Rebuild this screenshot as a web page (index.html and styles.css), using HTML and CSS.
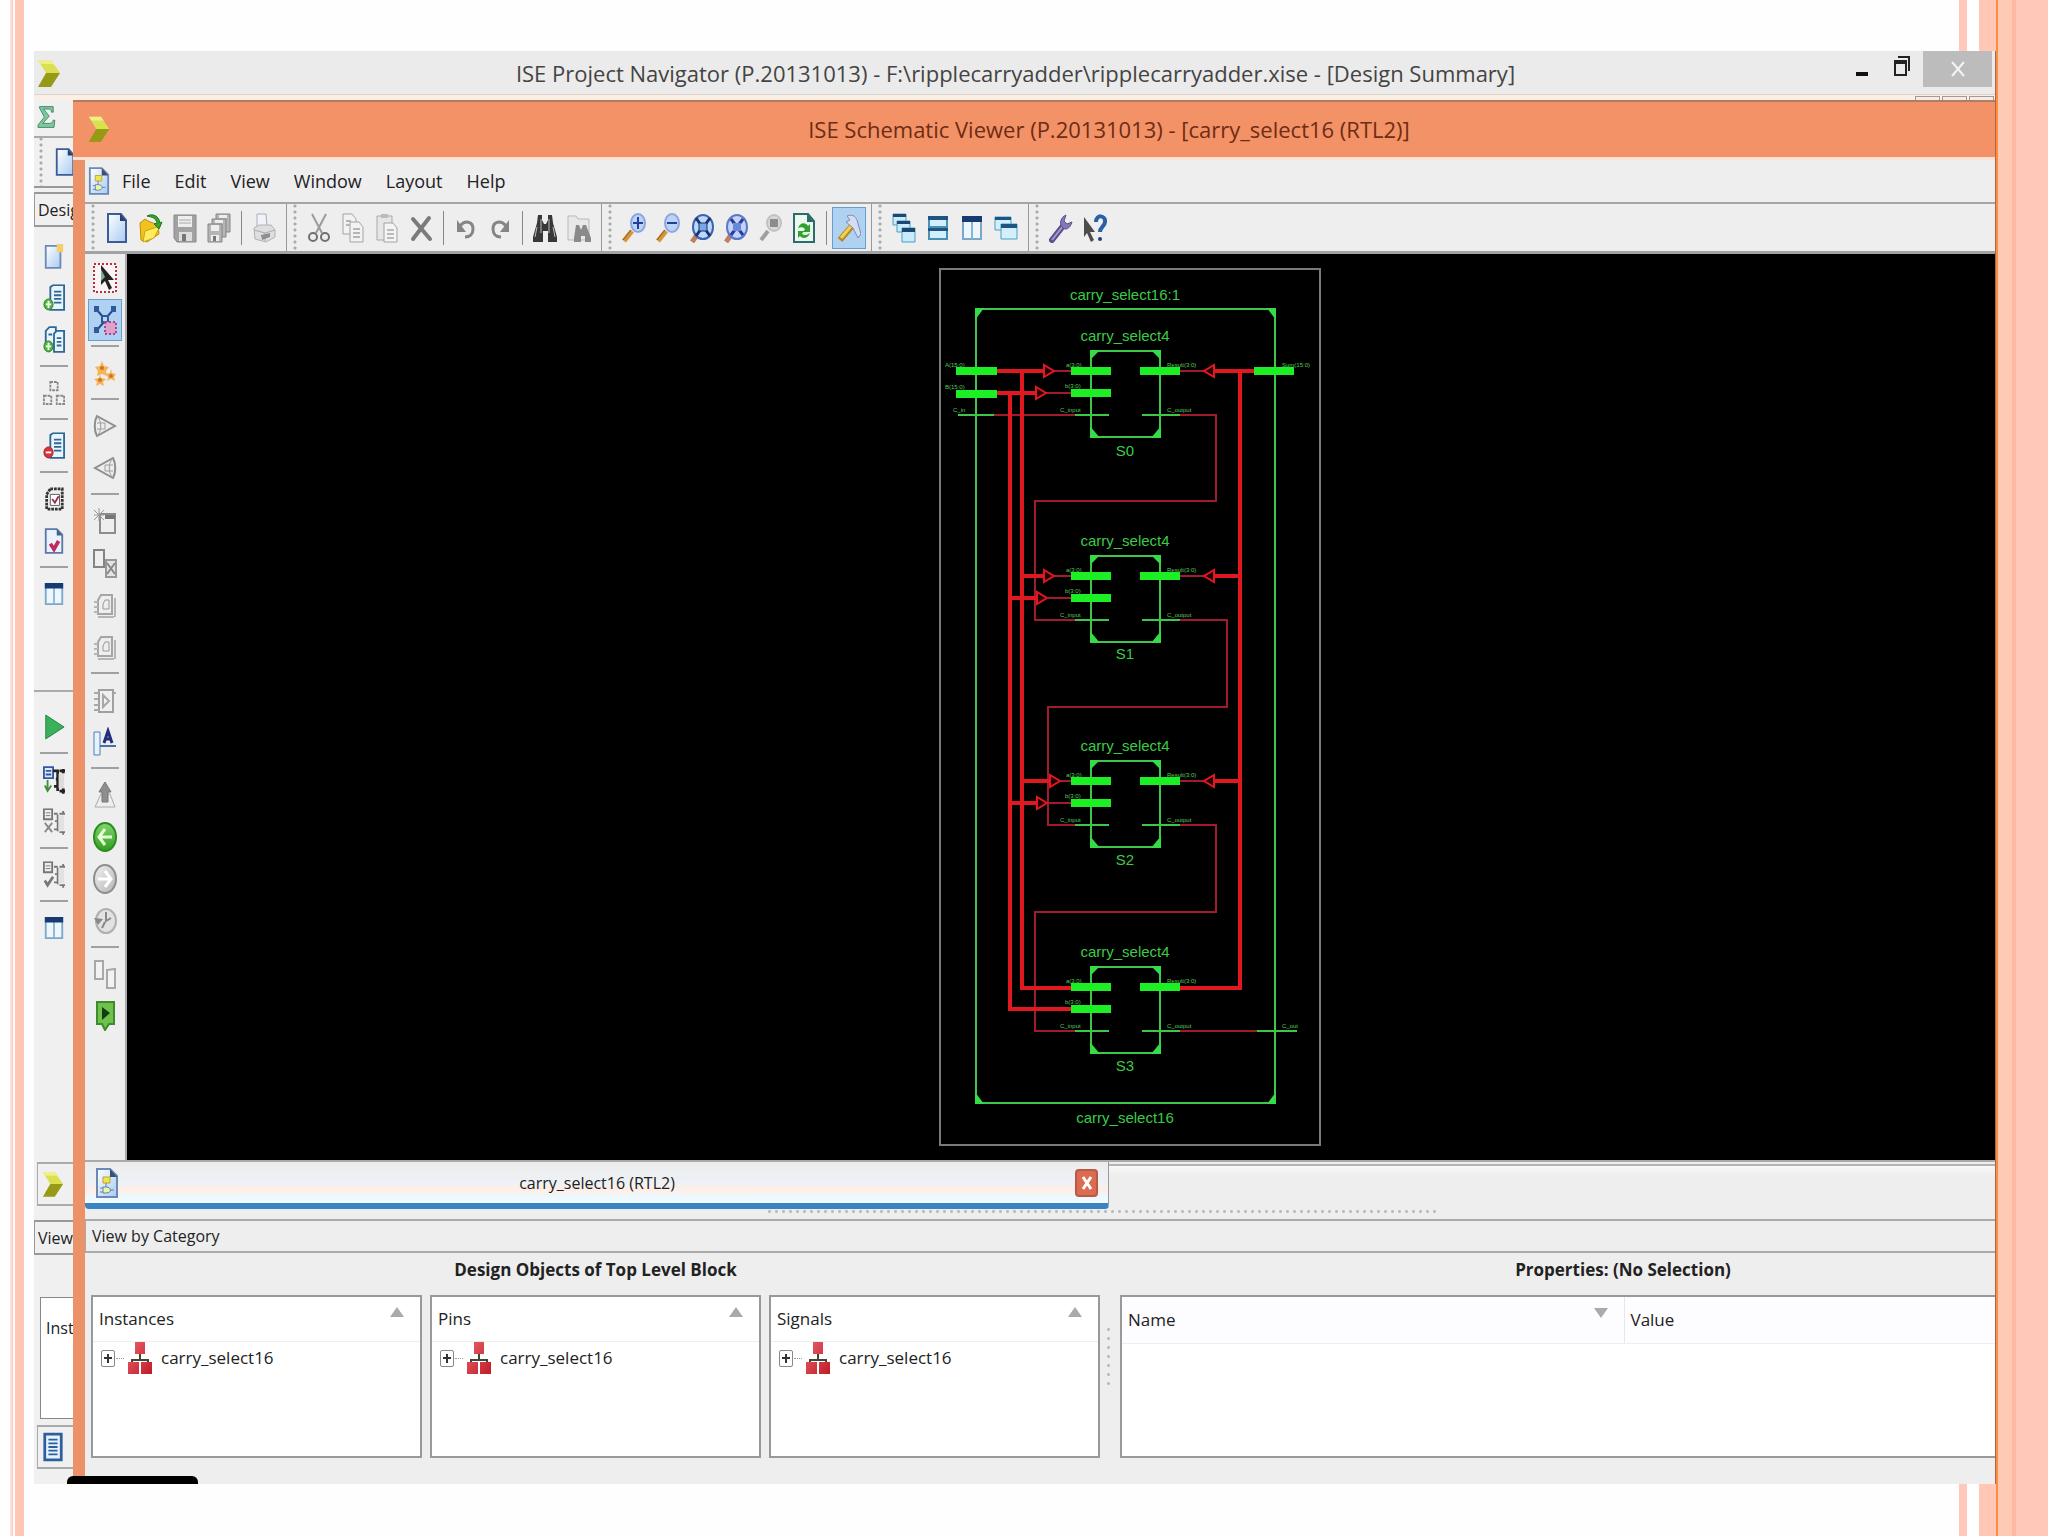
FILE: index.html
```html
<!DOCTYPE html>
<html lang="en">
<head>
<meta charset="utf-8">
<title>ISE Project Navigator</title>
<link rel="stylesheet" href="styles.css">
</head>
<body>
<svg class="defs" aria-hidden="true">
  <defs>
    <linearGradient id="paper" x1="0" y1="0" x2="1" y2="1"><stop offset="0" stop-color="#fff"/><stop offset="1" stop-color="#a9cbf2"/></linearGradient>
    <linearGradient id="leaf" x1="0" y1="0" x2="0" y2="1"><stop offset="0" stop-color="#7fd86a"/><stop offset="1" stop-color="#2f9e22"/></linearGradient>
    <linearGradient id="silver" x1="0" y1="0" x2="1" y2="1"><stop offset="0" stop-color="#f2f2f2"/><stop offset="1" stop-color="#b4b4b4"/></linearGradient>
    <linearGradient id="brick" x1="0" y1="0" x2="1" y2="1"><stop offset="0" stop-color="#e8606a"/><stop offset="1" stop-color="#c01c28"/></linearGradient>
  </defs>
  <symbol id="logo" viewBox="0 0 24 30"><path d="M1 2h13l9 13H9z" fill="#dbe050"/><path d="M9 15h14L14 29H1z" fill="#979a14"/><path d="M1 2h13l3 4H4z" fill="#eef08a"/></symbol>
  <symbol id="new" viewBox="0 0 24 30"><path d="M3 1h13l5 6v22H3z" fill="url(#paper)" stroke="#3c5c98" stroke-width="2"/><path d="M15 1v7h6z" fill="#26406e"/></symbol>
  <symbol id="open" viewBox="0 0 24 30"><path d="M1 10l5-4 3 2 10 4 1 9-12 8-6-2z" fill="#f2c21e" stroke="#b98d12"/><path d="M6 18l15-5-6 12-11 4z" fill="#ffec5c" stroke="#c9a51a"/><path d="M8 3c6-3 12 0 13 7l2-1-3 7-5-5 3-1c-1-5-5-6-10-7z" fill="#38a32c" stroke="#20771a"/></symbol>
  <symbol id="save" viewBox="0 0 24 30"><path d="M1 2h22v27H4l-3-4z" fill="#a2a2a2" stroke="#888"/><path d="M5 3h14v11H5z" fill="#eee"/><path d="M6 7h12M6 10h12" stroke="#aaa"/><path d="M6 19h13v9H6z" fill="#ddd"/><path d="M9 21h4v7H9z" fill="#777"/></symbol>
  <symbol id="saveall" viewBox="0 0 24 30"><g fill="#b5b5b5" stroke="#858585"><path d="M9 1h14v18H9z"/><path d="M5 6h14v18H5z"/><path d="M1 11h14v18H1z"/></g><path d="M4 12h8v6H4zM4 22h8v6H4zM8 7h8v3H8zM12 2h8v3h-8z" fill="#eee"/><path d="M6 23h3v5H6z" fill="#777"/></symbol>
  <symbol id="print" viewBox="0 0 24 30"><path d="M5 1h9l1 13H5z" fill="#f1f3f8" stroke="#a8adba"/><path d="M2 15l5-3h12l4 5v7l-9 5-11-3z" fill="#dedee2" stroke="#b2b2b2"/><path d="M2 17l11 3 10-3M13 20v8" fill="none" stroke="#aaa"/><path d="M9 22l9-2v4l-8 3z" fill="#8e8e8e"/></symbol>
  <symbol id="cut" viewBox="0 0 24 30"><path d="M5 1l10 19M19 1L9 20" stroke="#9b9b9b" stroke-width="2"/><ellipse cx="6" cy="24" rx="4" ry="4" fill="none" stroke="#707070" stroke-width="2"/><ellipse cx="18" cy="24" rx="4" ry="4" fill="none" stroke="#707070" stroke-width="2"/></symbol>
  <symbol id="copy" viewBox="0 0 24 30"><g fill="#f2f2f2" stroke="#a3a3a3"><path d="M2 1h9l4 5v15H2z"/><path d="M9 9h9l4 5v15H9z"/></g><path d="M5 8h5M5 12h4M12 16h7M12 20h7M12 24h7" stroke="#b5b5b5" stroke-width="2"/></symbol>
  <symbol id="paste" viewBox="0 0 24 30"><path d="M2 3h15v24H2z" fill="#e6e6e6" stroke="#a8a8a8"/><path d="M6 1h7v4H6z" fill="#bbb"/><path d="M9 10h9l4 5v14H9z" fill="#f4f4f4" stroke="#a3a3a3"/><path d="M12 17h7M12 21h7M12 25h7" stroke="#bbb" stroke-width="2"/></symbol>
  <symbol id="delete" viewBox="0 0 24 30"><path d="M4 6l17 20M20 5L4 26" stroke="#7b7b7b" stroke-width="4" stroke-linecap="round"/></symbol>
  <symbol id="undo" viewBox="0 0 24 30"><path d="M6 13c5-6 13-5 13 3 0 5-3 8-8 8" fill="none" stroke="#858585" stroke-width="3"/><path d="M3 7v12h9z" fill="#858585"/></symbol>
  <symbol id="redo" viewBox="0 0 24 30"><path d="M18 13c-5-6-13-5-13 3 0 5 3 8 8 8" fill="none" stroke="#858585" stroke-width="3"/><path d="M21 7v12h-9z" fill="#858585"/></symbol>
  <symbol id="find" viewBox="0 0 24 30"><path d="M5 2h4v5l2 4h2l2-4V2h4l1 8 4 14v5h-9V18h-5v11H0v-5l4-14z" fill="#383838"/><path d="M4 14l-2 10M20 14l2 10M8 6v14M16 6v14" stroke="#bbb"/></symbol>
  <symbol id="findfiles" viewBox="0 0 24 30"><path d="M1 3h8l2 3h11v21H1z" fill="#e8e8e8" stroke="#b9b9b9"/><path d="M9 12h3l2 5 2-5h3l5 13v4h-6v-6h-4v6H7v-4z" fill="#8a8a8a"/></symbol>
  <symbol id="glass" viewBox="0 0 24 30"><path d="M2 28l8-10" stroke="#d69638" stroke-width="5"/><path d="M1 27l8-10" stroke="#7d5a30"/><ellipse cx="16" cy="10" rx="7" ry="9" fill="#bcd4fa" stroke="#8ca6e0" stroke-width="2"/></symbol>
  <symbol id="zoomin" viewBox="0 0 24 30"><use href="#glass"/><path d="M11 10h10M16 4v12" stroke="#1f3f99" stroke-width="2"/></symbol>
  <symbol id="zoomout" viewBox="0 0 24 30"><use href="#glass"/><path d="M11 10h10" stroke="#1f3f99" stroke-width="2"/></symbol>
  <symbol id="zoomfit" viewBox="0 0 24 30"><path d="M2 29l5-7" stroke="#c08060" stroke-width="5"/><ellipse cx="13" cy="14" rx="10" ry="12" fill="#bcd8fa" stroke="#3c64b4" stroke-width="2"/><path d="M6 5l5 7M20 5l-5 7M6 23l5-7M20 23l-5-7" stroke="#1c3470" stroke-width="3"/><path d="M9 10h8v8H9z" fill="#7aa8e6" stroke="#1c3470"/></symbol>
  <symbol id="zoomsel" viewBox="0 0 24 30"><path d="M2 29l5-7" stroke="#c08060" stroke-width="5"/><ellipse cx="13" cy="14" rx="10" ry="12" fill="#c4d2fa" stroke="#5a78c8" stroke-width="2"/><path d="M7 6l12 16M19 6L7 22" stroke="#283c9c" stroke-width="3"/><path d="M9 10h8v8H9z" fill="#6888dc"/></symbol>
  <symbol id="zoomgrey" viewBox="0 0 24 30"><path d="M3 27l7-9" stroke="#a0a0a0" stroke-width="4"/><ellipse cx="16" cy="10" rx="7" ry="8" fill="#d8d8d8" stroke="#c2c2c2" stroke-width="2"/><path d="M12 6h8v8h-8z" fill="#8c8c8c"/></symbol>
  <symbol id="refresh" viewBox="0 0 24 30"><path d="M2 1h14l6 7v21H2z" fill="#eaf8f0" stroke="#2d6a6a" stroke-width="2"/><path d="M15 1v8h7z" fill="#2d6a6a"/><path d="M6 15c2-6 8-6 10-2l2-2v8h-7l2-3c-2-2-4-2-7-1zM18 20c-2 6-8 6-10 3l-2 2v-7h6l-2 3c3 2 5 1 8-1z" fill="#2fa32f"/></symbol>
  <symbol id="hammer" viewBox="0 0 24 30"><path d="M3 27L15 13" stroke="#b98a20" stroke-width="6"/><path d="M4 25L15 12" stroke="#f0cf5a" stroke-width="3"/><path d="M10 3c5-2 8 0 10 4l4 14-3 4-5-10-7-6 4-2z" fill="#d5ddf2" stroke="#7d8ab0"/></symbol>
  <symbol id="cascade" viewBox="0 0 24 30"><g fill="#c9ecfa" stroke="#4a9fc4"><path d="M1 1h13v11H1z"/><path d="M5 8h13v11H5z"/><path d="M10 15h13v14H10z"/></g><path d="M1 1h13v3H1zM5 8h13v3H5zM10 15h13v4H10z" fill="#1d4674"/></symbol>
  <symbol id="tileh" viewBox="0 0 24 30"><g fill="#d2f0fb" stroke="#4a8fb4" stroke-width="2"><path d="M3 4h18v10H3zM3 16h18v10H3z"/></g><path d="M2 3h20v4H2zM2 15h20v3H2z" fill="#1d5684"/></symbol>
  <symbol id="tilev" viewBox="0 0 24 30"><path d="M3 4h18v22H3z" fill="#eef6fd" stroke="#7ba8c8" stroke-width="2"/><path d="M12 8v18" stroke="#8bb4d0" stroke-width="2"/><path d="M2 3h20v6H2z" fill="#163a72"/></symbol>
  <symbol id="layers" viewBox="0 0 24 30"><g fill="#d2f0fb" stroke="#4a9fc4"><path d="M1 4h16v13H1z"/><path d="M7 11h16v15H7z"/></g><path d="M1 4h16v3H1zM7 11h16v4H7z" fill="#1d5684"/></symbol>
  <symbol id="wrench" viewBox="0 0 24 30"><path d="M3 27l11-14" stroke="#5c4f8c" stroke-width="6" stroke-linecap="round"/><path d="M3 27l11-14" stroke="#a79bd0" stroke-width="2"/><path d="M17 2c-5 2-7 8-4 12 3 4 8 2 10-5l-5 2-3-3z" fill="#8478b8" stroke="#5c4f8c"/></symbol>
  <symbol id="help" viewBox="0 0 24 30"><path d="M1 4v20l3-4 4 9 3-2-4-8h5z" fill="#4c4c4c"/><path d="M13 9c0-8 10-7 9 0 0 4-5 5-5 10" fill="none" stroke="#2b5fa8" stroke-width="4"/><circle cx="17" cy="26" r="2" fill="#223f80"/></symbol>
  <symbol id="schem" viewBox="0 0 24 30"><path d="M2 1h13l7 7v21H2z" fill="url(#paper)" stroke="#6a88b8" stroke-width="2"/><path d="M15 1v8h7z" fill="#3a4f78"/><path d="M8 9h7v6H8z" fill="#f4e24a" stroke="#b8a83a"/><path d="M8 19h3c6 0 6 6 0 6H8zM5 20h3M5 24h3M15 22h4M11 15v4" fill="#f0f6a0" stroke="#5a82b8" stroke-width="1"/></symbol>
  <symbol id="pointer" viewBox="0 0 24 30"><path d="M1 1h22v28H1z" fill="#fbf4f4" stroke="#b83040" stroke-width="2" stroke-dasharray="2 2"/><path d="M8 2v20l4-4 4 9 3-2-4-8h6z" fill="#222"/><path d="M8 6v12l4-4z" fill="#7fb09a"/></symbol>
  <symbol id="select" viewBox="0 0 24 30"><path d="M3 4l8 9M21 4l-8 9M3 26l8-9" stroke="#244a86" stroke-width="2"/><path d="M1 1h5v6H1zM18 1h5v6h-5zM1 22h5v6H1zM8 10h8v8H8z" fill="#2c5a9c"/><path d="M10 12h4v4h-4z" fill="#b8d8f6"/><path d="M12 17h11v12H12z" fill="#e0a0cc" stroke="#a04890" stroke-width="2" stroke-dasharray="2 2"/></symbol>
  <symbol id="flowers" viewBox="0 0 24 30"><g fill="#f5b455"><path d="M9 3l2 5 5 1-3 4 1 5-5-2-5 2 1-5-3-4 5-1zM18 11l1 4 4 1-2 3 1 4-4-2-4 2 1-4-3-3 5-1zM7 16l1 4 5 1-3 3 1 4-4-2-4 2 1-4-3-3 5-1z"/></g><g fill="#c9742a"><circle cx="9" cy="10" r="2"/><circle cx="18" cy="18" r="2"/><circle cx="7" cy="22" r="2"/></g></symbol>
  <symbol id="coner" viewBox="0 0 24 30"><path d="M4 5l18 10L4 25c-3-5-3-15 0-20z" fill="#ececec" stroke="#8d8d8d" stroke-width="2"/><path d="M4 5c5 5 5 15 0 20M4 12h8v6H4" fill="none" stroke="#9d9d9d"/></symbol>
  <symbol id="conel" viewBox="0 0 24 30"><path d="M20 5L2 15l18 10c3-5 3-15 0-20z" fill="#ececec" stroke="#8d8d8d" stroke-width="2"/><path d="M20 5c-5 5-5 15 0 20M20 12h-8v6h8" fill="none" stroke="#9d9d9d"/></symbol>
  <symbol id="boxnew" viewBox="0 0 24 30"><path d="M7 8h15v19H7z" fill="#eee" stroke="#8d8d8d" stroke-width="2"/><path d="M12 9h10v4H12z" fill="#777"/><path d="M1 4l10 10M11 4L1 14M6 2v13M1 9h10" stroke="#999"/></symbol>
  <symbol id="boxdel" viewBox="0 0 24 30"><path d="M1 2h10v17H1z" fill="#eee" stroke="#848484" stroke-width="2"/><path d="M13 12h10v17H13z" fill="#e4e4e4" stroke="#999" stroke-width="2"/><path d="M14 15l8 11M22 15l-8 11" stroke="#888" stroke-width="2"/></symbol>
  <symbol id="chipg" viewBox="0 0 24 30"><path d="M8 5h11v19H5V10z" fill="#eee" stroke="#a5a5a5" stroke-width="2"/><path d="M12 10h4v9h-6v-5z" fill="none" stroke="#999"/><path d="M1 12h4M1 17h4M1 22h4M5 27h16M22 8v19" stroke="#b5b5b5" stroke-width="2"/></symbol>
  <symbol id="pins" viewBox="0 0 24 30"><path d="M6 5h14v22H6z" fill="#f0f0f0" stroke="#a0a0a0" stroke-width="2"/><path d="M1 8h5M1 14h5M1 20h5M1 25h5M20 8h3M10 10l6 6-6 6z" fill="none" stroke="#a8a8a8" stroke-width="2"/></symbol>
  <symbol id="labela" viewBox="0 0 24 30"><path d="M1 5h6v23H1z" fill="#e8f2fc" stroke="#4a7fb8"/><path d="M7 19h16" stroke="#4a6fa8" stroke-width="2"/><path d="M11 16l4-12 4 12M13 12h5" fill="none" stroke="#222e7c" stroke-width="3"/></symbol>
  <symbol id="uparrow" viewBox="0 0 24 30"><path d="M8 14h9l5 13H2z" fill="#eee" stroke="#aaa"/><path d="M12 2l6 10h-3v10H9V12H6z" fill="#8e8e8e" stroke="#777"/></symbol>
  <symbol id="back" viewBox="0 0 24 30"><ellipse cx="12" cy="15" rx="11" ry="14" fill="url(#leaf)" stroke="#2c8c22" stroke-width="2"/><path d="M12 7l-6 8 6 8M6 15h13" fill="none" stroke="#e8ffd8" stroke-width="3"/></symbol>
  <symbol id="fwd" viewBox="0 0 24 30"><ellipse cx="12" cy="15" rx="11" ry="14" fill="url(#silver)" stroke="#8e8e8e" stroke-width="2"/><path d="M12 7l6 8-6 8M18 15H5" fill="none" stroke="#fff" stroke-width="3"/></symbol>
  <symbol id="history" viewBox="0 0 24 30"><ellipse cx="13" cy="15" rx="10" ry="12" fill="#e2e2e2" stroke="#b0b0b0" stroke-width="2"/><path d="M13 6v9l5-3M12 16l-3 6" fill="none" stroke="#888" stroke-width="2"/><path d="M1 12l4 7 5-6z" fill="#888"/></symbol>
  <symbol id="pair" viewBox="0 0 24 30"><path d="M2 2h8v18H2zM14 11l8-1v19h-8z" fill="#f2f2f2" stroke="#a8a8a8" stroke-width="2"/></symbol>
  <symbol id="marker" viewBox="0 0 24 30"><path d="M4 1h17v22h-5l-4 6-3-6H4z" fill="#6cc24a" stroke="#3f8a2c" stroke-width="2"/><path d="M9 6v13l8-7z" fill="#123c12"/></symbol>
  <symbol id="sigma" viewBox="0 0 24 30"><path d="M4 2h17v7h-2c0-3-2-4-4-4H9l7 9-8 9h8c3 0 4-1 5-4h2l-1 9H2v-3l8-10L4 4z" fill="#7fc9a0" stroke="#2c7a54"/></symbol>
  <symbol id="newsrc" viewBox="0 0 24 30"><path d="M3 4h16v24H3z" fill="url(#paper)" stroke="#6c8ab8" stroke-width="2"/><path d="M15 2h7v9h-7z" fill="#f2cf6a"/></symbol>
  <symbol id="lines" viewBox="0 0 24 30"><path d="M8 3l3-2h12v27H8z" fill="#e8f5fc" stroke="#2f6796" stroke-width="2"/><path d="M12 8h8M12 12h8M12 16h8M12 20h8" stroke="#2f6796" stroke-width="2"/></symbol>
  <symbol id="adddoc" viewBox="0 0 24 30"><use href="#lines"/><ellipse cx="6" cy="22" rx="5" ry="6" fill="#4db53c" stroke="#2c8222"/><path d="M3 22h6M6 18v8" stroke="#fff" stroke-width="2"/></symbol>
  <symbol id="copydoc" viewBox="0 0 24 30"><path d="M3 5l4-4h7v22H3z" fill="#e8f5fc" stroke="#2f6796" stroke-width="2"/><path d="M12 8l3-3h8v23H12z" fill="#e8f5fc" stroke="#2f6796" stroke-width="2"/><path d="M15 13h5M15 17h5M15 21h5M6 9h4" stroke="#2f6796" stroke-width="2"/><ellipse cx="6" cy="22" rx="5" ry="6" fill="#4db53c" stroke="#2c8222"/><path d="M3 22h6M6 18v8" stroke="#fff" stroke-width="2"/></symbol>
  <symbol id="deldoc" viewBox="0 0 24 30"><use href="#lines"/><ellipse cx="6" cy="22" rx="5" ry="6" fill="#d8323a" stroke="#9c1c22"/><path d="M3 22h6" stroke="#fff" stroke-width="2"/></symbol>
  <symbol id="blocks" viewBox="0 0 24 30"><path d="M8 3h8v9H8zM1 18h8v9H1zM15 18h8v9h-8z" fill="none" stroke="#888" stroke-width="2" stroke-dasharray="3 1"/></symbol>
  <symbol id="gridcheck" viewBox="0 0 24 30"><path d="M8 4h13v22H4V10z" fill="#eee" stroke="#333" stroke-width="3" stroke-dasharray="3 1"/><path d="M8 10h10v12H8z" fill="#fff" stroke="#555"/><path d="M10 15l3 4 4-7" fill="none" stroke="#a02850" stroke-width="2"/></symbol>
  <symbol id="doccheck" viewBox="0 0 24 30"><path d="M3 2h12l6 6v20H3z" fill="#eaf3fd" stroke="#5a78a8" stroke-width="2"/><path d="M15 2v7h6z" fill="#4a5f88"/><path d="M8 18l4 6 5-9" fill="none" stroke="#c02860" stroke-width="4"/></symbol>
  <symbol id="play" viewBox="0 0 24 30"><path d="M3 2l20 13L3 28z" fill="#39b05a" stroke="#23803e"/></symbol>
  <symbol id="chiprun" viewBox="0 0 24 30"><path d="M1 1h10v12H1z" fill="#dce9fa" stroke="#3358a0" stroke-width="2"/><path d="M3 5h6M3 9h6" stroke="#3358a0" stroke-width="2"/><path d="M5 15v11M2 21l3 6 4-6" fill="none" stroke="#3f8f3a" stroke-width="2"/><path d="M16 7v18M11 5h5v5M14 14h2M12 22h4v5M18 5h6M18 27h6M22 3v5M22 24v6" fill="none" stroke="#222" stroke-width="3"/><path d="M17 8h6v16h-6z" fill="#ddd"/></symbol>
  <symbol id="chipg2" viewBox="0 0 24 30"><path d="M1 1h9v11H1z" fill="#eee" stroke="#777" stroke-width="2"/><path d="M3 5h5M3 8h5" stroke="#777"/><path d="M16 7v18M12 6h4M13 14h3M12 23h4M18 6h6M18 26h6M22 3v4M22 25v4" fill="none" stroke="#777" stroke-width="2"/><path d="M17 8h6v16h-6z" fill="#e2e2e2"/></symbol>
  <symbol id="chipx" viewBox="0 0 24 30"><use href="#chipg2"/><path d="M2 16l8 10M10 16L2 26" stroke="#888" stroke-width="2"/></symbol>
  <symbol id="chipok" viewBox="0 0 24 30"><use href="#chipg2"/><path d="M2 21l3 5 6-9" fill="none" stroke="#777" stroke-width="3"/></symbol>
  <symbol id="list" viewBox="0 0 24 30"><path d="M3 1h18v28H3z" fill="#e6f2fc" stroke="#2c5f9c" stroke-width="3"/><path d="M7 7h10M7 11h10M7 15h10M7 19h10M7 23h10" stroke="#2c5f9c" stroke-width="2"/></symbol>
  <symbol id="tree" viewBox="0 0 24 32"><path d="M12 12v6M4 22v-4h16v4" fill="none" stroke="#443" stroke-width="2"/><path d="M7 0h10v12H7zM0 20h11v12H0zM13 20h11v12H13z" fill="url(#brick)"/></symbol>
</svg>

<main class="navigator">
  <header class="nav-title">
    <svg class="ico"><use href="#logo"/></svg>
    <h1>ISE Project Navigator (P.20131013) - F:\ripplecarryadder\ripplecarryadder.xise - [Design Summary]</h1>
    <div class="nav-buttons">
      <button class="win-btn" aria-label="Minimize"><svg width="14" height="22"><path d="M1 17h12v4H1z" fill="#111"/></svg></button>
      <button class="win-btn" aria-label="Restore"><svg width="18" height="22"><path d="M2 6h11v14H2z" fill="none" stroke="#222" stroke-width="2"/><path d="M2 5h11v4H2z" fill="#222"/><path d="M5 2h11v14" fill="none" stroke="#222" stroke-width="2"/></svg></button>
      <button class="win-btn close" aria-label="Close"><svg width="14" height="16"><path d="M1 1l12 14M13 1L1 15" stroke="#f4f4f4" stroke-width="2"/></svg></button>
    </div>
    <div class="mdi"><i></i><i></i><i></i></div>
  </header>

  <div class="desk">
    <aside class="back">
      <div class="back-sigma"><svg class="ico"><use href="#sigma"/></svg></div>
      <div class="back-bar"><svg class="ico"><use href="#new"/></svg></div>
      <div class="back-label">Desig</div>
      <div class="vbar vbar-a">
        <button aria-label="New source"><svg class="ico"><use href="#newsrc"/></svg></button>
        <button aria-label="Add source"><svg class="ico"><use href="#adddoc"/></svg></button>
        <button aria-label="Add copy"><svg class="ico"><use href="#copydoc"/></svg></button>
        <hr><button aria-label="Hierarchy"><svg class="ico"><use href="#blocks"/></svg></button>
        <hr><button aria-label="Remove source"><svg class="ico"><use href="#deldoc"/></svg></button>
        <hr><button aria-label="Check chip"><svg class="ico"><use href="#gridcheck"/></svg></button>
        <button aria-label="Check file"><svg class="ico"><use href="#doccheck"/></svg></button>
        <hr><button aria-label="Columns"><svg class="ico"><use href="#tilev"/></svg></button>
      </div>
      <div class="vbar vbar-b">
        <button aria-label="Run"><svg class="ico"><use href="#play"/></svg></button>
        <hr><button aria-label="Run process"><svg class="ico"><use href="#chiprun"/></svg></button>
        <button aria-label="Stop process"><svg class="ico"><use href="#chipx"/></svg></button>
        <hr><button aria-label="Check process"><svg class="ico"><use href="#chipok"/></svg></button>
        <hr><button aria-label="Layout columns"><svg class="ico"><use href="#tilev"/></svg></button>
      </div>
      <div class="back-tab"><svg class="ico"><use href="#logo"/></svg></div>
      <div class="back-label back-view">View</div>
      <div class="back-list">Inst</div>
      <div class="back-tab back-doc"><svg class="ico"><use href="#list"/></svg></div>
    </aside>

    <section class="viewer">
      <header class="viewer-title"><svg class="ico"><use href="#logo"/></svg><h2>ISE Schematic Viewer (P.20131013) - [carry_select16 (RTL2)]</h2></header>
      <nav class="menu">
        <svg class="ico"><use href="#schem"/></svg>
        <button>File</button><button>Edit</button><button>View</button><button>Window</button><button>Layout</button><button>Help</button>
      </nav>
      <div class="toolbar">
        <div class="group">
          <button aria-label="New"><svg class="ico"><use href="#new"/></svg></button>
          <button aria-label="Open"><svg class="ico"><use href="#open"/></svg></button>
          <button aria-label="Save"><svg class="ico"><use href="#save"/></svg></button>
          <button aria-label="Save all"><svg class="ico"><use href="#saveall"/></svg></button>
          <span class="sep"></span>
          <button aria-label="Print"><svg class="ico"><use href="#print"/></svg></button>
        </div>
        <div class="group">
          <button aria-label="Cut"><svg class="ico"><use href="#cut"/></svg></button>
          <button aria-label="Copy"><svg class="ico"><use href="#copy"/></svg></button>
          <button aria-label="Paste"><svg class="ico"><use href="#paste"/></svg></button>
          <button aria-label="Delete"><svg class="ico"><use href="#delete"/></svg></button>
          <span class="sep"></span>
          <button aria-label="Undo"><svg class="ico"><use href="#undo"/></svg></button>
          <button aria-label="Redo"><svg class="ico"><use href="#redo"/></svg></button>
          <span class="sep"></span>
          <button aria-label="Find"><svg class="ico"><use href="#find"/></svg></button>
          <button aria-label="Find in files"><svg class="ico"><use href="#findfiles"/></svg></button>
        </div>
        <div class="group">
          <button aria-label="Zoom in"><svg class="ico"><use href="#zoomin"/></svg></button>
          <button aria-label="Zoom out"><svg class="ico"><use href="#zoomout"/></svg></button>
          <button aria-label="Zoom to full view"><svg class="ico"><use href="#zoomfit"/></svg></button>
          <button aria-label="Zoom to box"><svg class="ico"><use href="#zoomsel"/></svg></button>
          <button aria-label="Zoom to selected"><svg class="ico"><use href="#zoomgrey"/></svg></button>
          <button aria-label="Refresh"><svg class="ico"><use href="#refresh"/></svg></button>
          <span class="sep"></span>
          <button class="on" aria-label="Tools"><svg class="ico"><use href="#hammer"/></svg></button>
        </div>
        <div class="group">
          <button aria-label="Cascade"><svg class="ico"><use href="#cascade"/></svg></button>
          <button aria-label="Tile horizontally"><svg class="ico"><use href="#tileh"/></svg></button>
          <button aria-label="Tile vertically"><svg class="ico"><use href="#tilev"/></svg></button>
          <button aria-label="Layers"><svg class="ico"><use href="#layers"/></svg></button>
        </div>
        <div class="group last">
          <button aria-label="Settings"><svg class="ico"><use href="#wrench"/></svg></button>
          <button aria-label="Context help"><svg class="ico"><use href="#help"/></svg></button>
        </div>
      </div>

      <div class="work">
        <div class="vbar vbar-main">
          <button aria-label="Pointer"><svg class="ico"><use href="#pointer"/></svg></button>
          <button class="on" aria-label="Select area"><svg class="ico"><use href="#select"/></svg></button>
          <hr><button aria-label="Highlight"><svg class="ico"><use href="#flowers"/></svg></button>
          <hr><button aria-label="Output cone"><svg class="ico"><use href="#coner"/></svg></button>
          <button aria-label="Input cone"><svg class="ico"><use href="#conel"/></svg></button>
          <hr><button aria-label="New schematic"><svg class="ico"><use href="#boxnew"/></svg></button>
          <button aria-label="Remove"><svg class="ico"><use href="#boxdel"/></svg></button>
          <button aria-label="Show drivers"><svg class="ico"><use href="#chipg"/></svg></button>
          <button aria-label="Show loads"><svg class="ico"><use href="#chipg"/></svg></button>
          <hr><button aria-label="Pins"><svg class="ico"><use href="#pins"/></svg></button>
          <button aria-label="Labels"><svg class="ico"><use href="#labela"/></svg></button>
          <hr><button aria-label="Pop"><svg class="ico"><use href="#uparrow"/></svg></button>
          <button aria-label="Back"><svg class="ico"><use href="#back"/></svg></button>
          <button aria-label="Forward"><svg class="ico"><use href="#fwd"/></svg></button>
          <button aria-label="History"><svg class="ico"><use href="#history"/></svg></button>
          <hr><button aria-label="Compare"><svg class="ico"><use href="#pair"/></svg></button>
          <button aria-label="Marker"><svg class="ico"><use href="#marker"/></svg></button>
        </div>
        <div class="canvas">
          <svg class="schematic" width="382" height="878" viewBox="939 268 382 878" role="img" aria-label="Schematic of carry_select16">
            <defs>
              <g id="cell">
                <path class="g-line" d="M1091 1h69v86h-69z"/>
                <path class="g-fill" d="M1090 0h10l-10 10zM1161 0h-10l10 10zM1090 88h10l-10-12zM1161 88h-10l10-12z"/>
                <path class="g-pin" d="M1071 17h40v8h-40zM1140 17h40v8h-40zM1071 39h40v8h-40z"/>
                <path class="g-line" d="M1075 65h34M1142 65h38"/>
                <text class="name" x="1125" y="-9">carry_select4</text>
                <g class="tiny">
                  <text x="1066" y="17">a(3:0)</text><text x="1065" y="38">b(3:0)</text><text x="1060" y="62">C_input</text>
                  <text x="1167" y="17">Result(3:0)</text><text x="1167" y="62">C_output</text>
                </g>
              </g>
              <path id="tri" d="M0 -6v12l10-6z"/>
            </defs>
            <path class="frame" d="M940 269h380v876H940z"/>
            <path class="thin" d="M994 415h81M1180 415h36v86h-181v119h40M1180 620h47v87h-179v118h27M1180 825h36v87h-181v119h40M1180 1031h77M1053 371h18M1046 393h25M1053 576h18M1048 598h23M1060 781h11M1047 803h24M1180 371h24M1180 576h24M1180 781h24"/>
            <path class="bus" d="M997 371h46M997 393h39M1022 371v617h50M1010 393v616h62M1022 576h21M1008 598h30M1022 781h28M1008 803h29M1214 371h40M1240 371v617h-62M1214 576h26M1214 781h26"/>
            <g class="tri">
              <use href="#tri" x="1044" y="371"/><use href="#tri" x="1036" y="393"/><use href="#tri" x="1044" y="576"/><use href="#tri" x="1037" y="598"/><use href="#tri" x="1050" y="781"/><use href="#tri" x="1037" y="803"/>
              <path d="M1214 365v12l-10-6zM1214 570v12l-10-6zM1214 775v12l-10-6z"/>
            </g>
            <path class="g-line" d="M976 309h299v794H976z"/>
            <path class="g-fill" d="M975 308h9l-9 12zM1276 308h-9l9 12zM975 1104h9l-9-12zM1276 1104h-9l9-12z"/>
            <path class="g-pin" d="M956 367h41v8h-41zM956 390h41v8h-41zM1254 367h40v8h-40z"/>
            <path class="g-line" d="M958 415h36M1257 1031h40"/>
            <use href="#cell" y="350"/><use href="#cell" y="555"/><use href="#cell" y="760"/><use href="#cell" y="966"/>
            <text class="name" x="1125" y="300">carry_select16:1</text>
            <text class="name" x="1125" y="456">S0</text><text class="name" x="1125" y="659">S1</text><text class="name" x="1125" y="865">S2</text><text class="name" x="1125" y="1071">S3</text>
            <text class="name" x="1125" y="1123">carry_select16</text>
            <g class="tiny">
              <text x="945" y="367">A(15:0)</text><text x="945" y="389">B(15:0)</text><text x="953" y="412">C_in</text>
              <text x="1282" y="367">Sum(15:0)</text><text x="1282" y="1028">C_out</text>
            </g>
          </svg>
        </div>
      </div>

      <div class="tabs">
        <div class="tab">
          <svg class="ico"><use href="#schem"/></svg>
          <span>carry_select16 (RTL2)</span>
          <button class="tab-close" aria-label="Close tab"><svg width="12" height="14"><path d="M2 1l8 12M10 1L2 13" stroke="#fff" stroke-width="3"/></svg></button>
        </div>
        <div class="tab-rest"></div>
      </div>
      <div class="splitter"></div>
      <div class="category">View by Category</div>

      <div class="panels">
        <section class="objects">
          <h3>Design Objects of Top Level Block</h3>
          <div class="lists">
            <div class="box"><div class="head">Instances<span class="up"></span></div><div class="node"><span class="plus"></span><svg class="tree-ico"><use href="#tree"/></svg>carry_select16</div></div>
            <div class="box"><div class="head">Pins<span class="up"></span></div><div class="node"><span class="plus"></span><svg class="tree-ico"><use href="#tree"/></svg>carry_select16</div></div>
            <div class="box"><div class="head">Signals<span class="up"></span></div><div class="node"><span class="plus"></span><svg class="tree-ico"><use href="#tree"/></svg>carry_select16</div></div>
          </div>
        </section>
        <div class="vsplit"></div>
        <section class="props">
          <h3>Properties: (No Selection)</h3>
          <div class="box flush">
            <table>
              <thead><tr><th class="c-name"><div class="cell">Name<span class="down"></span></div></th><th class="c-value">Value</th></tr></thead>
            </table>
          </div>
        </section>
      </div>
    </section>
  </div>
  <div class="dock"></div>
</main>
</body>
</html>
```
FILE: styles.css
```css
* { box-sizing: border-box; }
body {
  margin: 0;
  min-height: 100vh;
  display: flex;
  padding: 51px 52px 52px 34px;
  font-family: "Open Sans", "Noto Sans", sans-serif;
  font-size: 17px;
  line-height: 26px;
  color: #222;
  background:
    linear-gradient(90deg, #ffe0d6 0 2px, #ffc6b6 2px 3px, #fff 3px 5px, #ffc6b4 5px 14px, transparent 14px) 10px 0 / 24px 100% no-repeat,
    linear-gradient(90deg, #ffc8b8 0 8px, #fff 8px 20px, #ffc8b6 20px 37px, #ff8c40 37px 39px, #fecab4 39px 53px, #ffb8a2 53px 57px, #ffc8b8 57px) right 0 top 0 / 89px 100% no-repeat,
    #fefefe;
}
.defs { position: absolute; width: 0; height: 0; }
h1, h2, h3 { margin: 0; font-weight: 400; }
button { margin: 0; padding: 0; border: 0; background: none; font: inherit; color: inherit; }
hr { width: 28px; height: 2px; margin: 4px auto 5px; border: 0; background: #a0a0a0; }
.ico { display: block; width: 24px; height: 30px; flex: none; }

.navigator { position: relative; flex: 1; min-width: 0; display: flex; flex-direction: column; background: #f0f0f0; border-right: 1px solid #a86848; }
.nav-title { position: relative; display: flex; align-items: center; height: 49px; padding: 0 3px 6px; background: linear-gradient(#ebebeb 43px, #dcd4cc 43px 44px, #fbeee4 44px); }
.nav-title h1 { flex: 1; padding-left: 115px; font-size: 22px; line-height: 32px; text-align: center; color: #444; white-space: nowrap; }
.nav-buttons { display: flex; align-self: flex-start; gap: 24px; }
.win-btn { height: 36px; display: grid; place-items: center; padding-bottom: 6px; }
.win-btn.close { width: 69px; margin-left: -12px; padding: 0; background: #bcbcbc; }
.mdi { position: absolute; right: 1px; bottom: 0; display: flex; gap: 2px; }
.mdi i { width: 25px; height: 4px; border: 1px solid #a89890; border-bottom: 0; background: #f4ece8; }

.desk { flex: 1; display: flex; min-height: 0; }
.back { width: 39px; flex: none; overflow: hidden; display: flex; flex-direction: column; font-size: 16px; white-space: nowrap; }
.back .ico { width: 22px; }
.back-sigma { height: 38px; padding: 2px 0 0 2px; border-bottom: 2px solid #aaa; }
.back-sigma .ico { width: 20px; height: 24px; margin-top: 3px; }
.back-bar { height: 50px; padding: 9px 0 0 20px; border-bottom: 2px solid #999; background: radial-gradient(circle, #aaa 1px, transparent 2px) 5px 4px / 4px 6px repeat-y; }
.back-label { height: 35px; margin-top: 4px; padding: 3px 3px; border: 1px solid #999; border-width: 2px 0 2px 1px; }
.vbar { display: flex; flex-direction: column; align-items: center; }
.vbar button { width: 34px; height: 42px; flex: none; display: grid; place-items: center; }
.vbar-a { height: 465px; padding: 8px 0 0 1px; border-bottom: 2px solid #aaa; }
.vbar-b { flex: 1; padding: 14px 0 0 1px; }
.back-tab { height: 44px; margin-left: 3px; padding: 5px 0 0 4px; border: 2px solid #aaa; border-width: 2px 0 2px 1px; }
.back-view { margin-top: 14px; }
.back-list { height: 122px; margin: 42px 0 6px 6px; padding: 17px 5px; background: #fff; border: 1px solid #888; border-right: 0; }
.back-doc { margin-bottom: 15px; }

.viewer { flex: 1; min-width: 0; display: flex; flex-direction: column; background: #efeeef; border-left: 12px solid #ec9268; }
.viewer-title { height: 60px; margin-left: -12px; padding: 0 0 2px 14px; display: flex; align-items: center; background: #f29266; border-top: 2px solid #b07c68; border-bottom: 3px solid #fbe2d2; }
.viewer-title .ico { height: 28px; }
.viewer-title h2 { flex: 1; padding-left: 112px; font-size: 22px; line-height: 32px; text-align: center; color: #6e2c14; white-space: nowrap; }
.menu { height: 42px; display: flex; align-items: center; gap: 24px; padding-left: 3px; font-size: 18px; }
.menu .ico { width: 22px; margin-right: -12px; }
.toolbar { height: 52px; display: flex; border-top: 2px solid #a5a5a5; border-bottom: 3px solid #a2a2a2; }
.group { display: flex; align-items: center; padding: 0 5px 0 15px; border-right: 1px solid #999; background: radial-gradient(circle, #aaa 1px, transparent 2px) 6px 5px / 4px 6px repeat-y; }
.group.last { border: 0; }
.group button { width: 34px; height: 42px; display: grid; place-items: center; }
.sep { width: 1px; height: 34px; margin: 0 5px; background: #888; }
.group .on, .vbar .on { background: #b0d2f2; border: 1px solid #6a9ccc; }

.work { flex: 1; min-height: 0; display: flex; }
.vbar-main { width: 42px; padding: 3px 0 0; border-right: 2px solid #aaa; }
.canvas { flex: 1; min-width: 0; background: #000; display: flex; align-items: center; justify-content: center; padding: 0 0 1px 138px; }
.schematic { display: block; flex: none; }
.frame { fill: none; stroke: #7a7a7a; stroke-width: 2; }
.g-line { fill: none; stroke: #3cc64a; stroke-width: 2; }
.g-fill { fill: #35dc48; }
.g-pin { fill: #1cf024; }
.thin { fill: none; stroke: #a01c2c; stroke-width: 2; }
.bus { fill: none; stroke: #e01820; stroke-width: 4; }
.tri { fill: #200; stroke: #e01820; stroke-width: 2; }
.name { font-family: "Liberation Sans", sans-serif; font-size: 15px; fill: #3ccb48; text-anchor: middle; }
.tiny { font-family: "Liberation Sans", sans-serif; font-size: 6px; fill: #5ac85a; }

.tabs { height: 49px; display: flex; border-top: 2px solid #aaa; }
.tab { width: 1024px; flex: none; display: flex; align-items: center; padding: 0 10px; background: linear-gradient(#ececec, #eef2f6 22px, #fdeee6 26px, #fdf0ea 30px, #eaf8ff 34px, #f4fbff); border-bottom: 6px solid #3b84c4; border-right: 1px solid #999; border-radius: 0 0 4px 4px; }
.tab span { flex: 1; text-align: center; font-size: 16px; }
.tab-close { width: 23px; height: 28px; display: grid; place-items: center; background: #dc6c50; border: 2px solid #b85a48; border-radius: 4px; }
.tab-rest { flex: 1; margin-top: 2px; border-top: 2px solid #b4b4b4; background: linear-gradient(#f8f8f8, #efeeef 10px); }
.splitter { height: 10px; width: 672px; align-self: center; background: radial-gradient(circle, #bbb 1px, transparent 2px) 0 0 / 7px 5px repeat-x; margin-left: 124px; }
.category { height: 34px; padding: 2px 6px; border: 1px solid #aaa; border-width: 2px 0 2px 1px; font-size: 16px; }
.panels { display: flex; }
h3 { padding: 4px 0 12px; font-size: 17px; line-height: 26px; font-weight: 700; text-align: center; white-space: nowrap; }
.objects { width: 1015px; padding-left: 6px; flex: none; }
.lists { display: grid; grid-template-columns: repeat(3, 1fr); gap: 8px; }
.box { height: 163px; background: #fff; border: 2px solid #999; margin-bottom: 26px; }
.head { height: 45px; display: flex; align-items: center; padding: 0 16px 0 6px; border-bottom: 1px solid #eee; }
.up, .down { margin-left: auto; margin-bottom: 14px; border: 7px solid transparent; border-top: 0; border-bottom: 10px solid #aaa; }
.down { border-bottom: 0; border-top: 10px solid #aaa; }
.node { display: flex; align-items: center; height: 32px; padding-left: 8px; }
.plus { position: relative; width: 14px; height: 17px; margin-right: 13px; border: 1px solid #888; border-radius: 2px; background: linear-gradient(#333, #333) center / 8px 2px no-repeat, linear-gradient(#333, #333) center / 2px 9px no-repeat; }
.plus::after { content: ""; position: absolute; left: 14px; top: 7px; width: 8px; border-top: 1px dotted #999; }
.tree-ico { width: 24px; height: 32px; margin-right: 9px; }
.vsplit { width: 20px; background: radial-gradient(circle, #bbb 1px, transparent 2px) 6px 0 / 5px 9px repeat-y; margin: 72px 0 96px; }
.props { flex: 1; min-width: 0; }
.props h3 { padding-left: 131px; }
.flush { border-right: 0; }
table { width: 100%; border-collapse: collapse; table-layout: fixed; }
th { height: 46px; padding: 0 6px; font-weight: 400; text-align: left; border-bottom: 1px solid #eee; background: #fdfcfe; }
.c-name { width: 502px; border-right: 1px solid #e8e8e8; }
.cell { display: flex; align-items: center; padding-right: 10px; }
.dock { position: absolute; left: 33px; bottom: 0; width: 131px; height: 8px; background: #000; border-radius: 6px 6px 0 0; }
```
